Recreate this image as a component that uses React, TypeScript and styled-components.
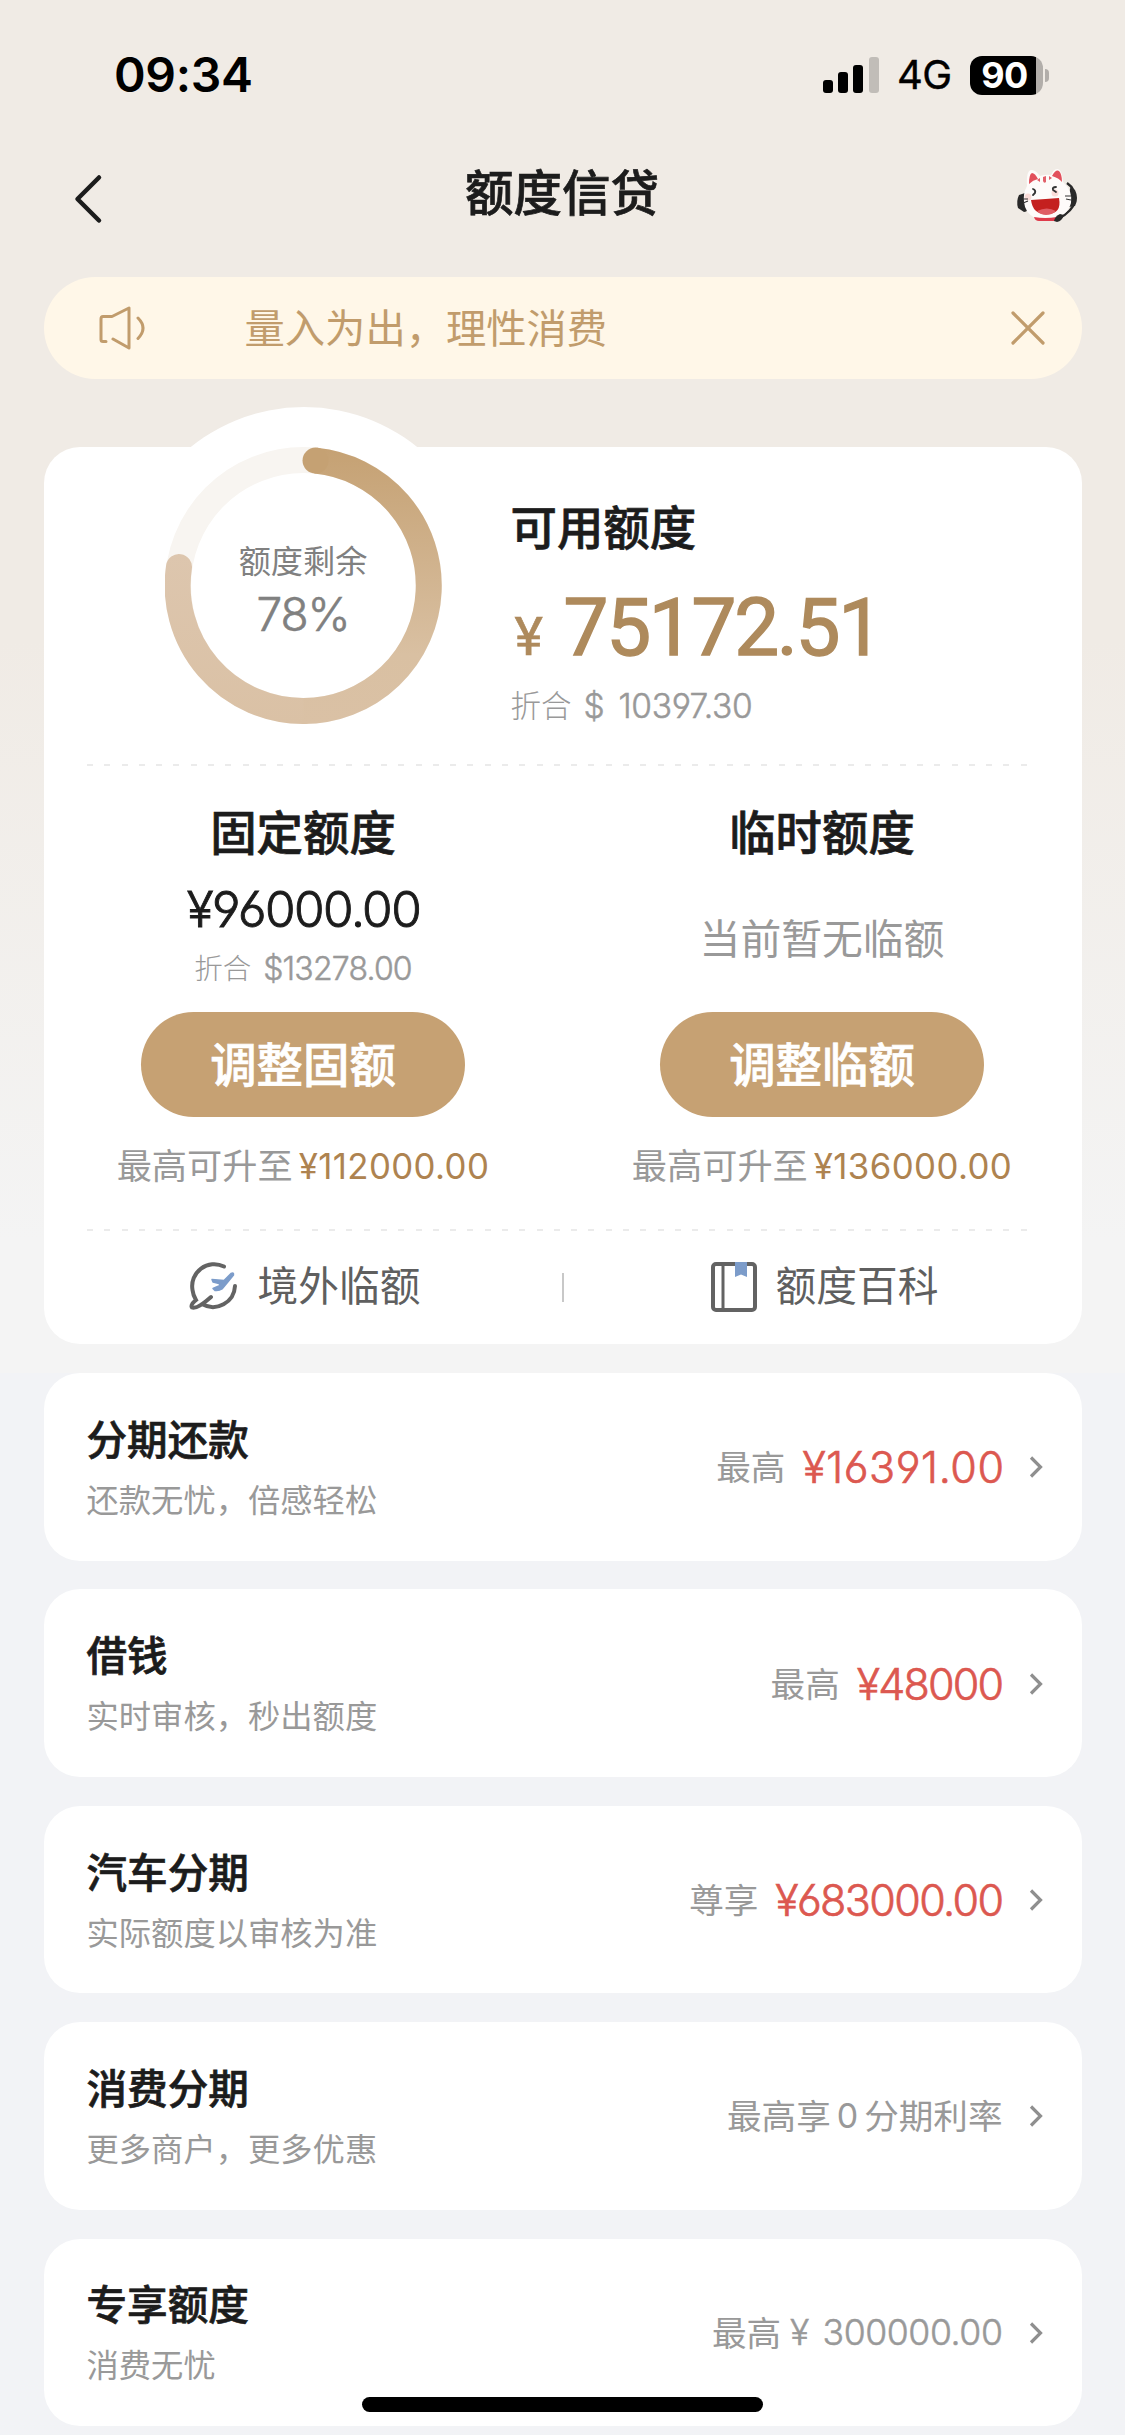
import React from "react";
import styled, { createGlobalStyle } from "styled-components";

const GlobalStyle = createGlobalStyle`
  * { box-sizing: border-box; }
  html, body { margin: 0; padding: 0; height: 2435px; overflow: hidden; }
  body {
    background: #f2f3f6;
    font-family: Inter, "Noto Sans CJK SC", sans-serif;
    color: #1c1c1c;
  }
`;

const Page = styled.div`
  position: relative;
  display: flex;
  flex-direction: column;
  width: 1125px;
  height: 2435px;
  overflow: hidden;
  background: linear-gradient(#f0ebe5 0, #f0ebe5 640px, #f4f4f4 1240px, #f4f4f4 1373px, #f2f3f6 1373px);
`;

const StatusBar = styled.header`
  display: flex;
  align-items: center;
  justify-content: space-between;
  flex: none;
  height: 150px;
  padding: 0 76px 0 114px;
`;
const Clock = styled.span`
  font-size: 48px;
  font-weight: 600;
  line-height: 50px;
  letter-spacing: -0.3px;
  color: #000;
`;
const StatusIcons = styled.div`
  display: flex;
  align-items: center;
`;
const Network = styled.span`
  width: 71px;
  padding-left: 17px;
  font-size: 40px;
  line-height: 42px;
  letter-spacing: -0.5px;
  color: #000;
  -webkit-text-stroke: 0.4px #000;
  white-space: nowrap;
`;
const Battery = styled.div`
  display: flex;
  align-items: center;
  margin-left: 19px;
`;
const BatteryBody = styled.div`
  display: flex;
  align-items: center;
  justify-content: center;
  width: 73px;
  height: 39px;
  padding-right: 4px;
  border-radius: 12px;
  background: linear-gradient(90deg, #000 66px, #b2aeaa 66px);
  color: #fff;
  font-size: 36px;
  font-weight: 700;
  line-height: 39px;
  letter-spacing: -0.5px;
`;
const BatteryNub = styled.div`
  width: 4px;
  height: 13px;
  margin-left: 2px;
  border-radius: 0 6px 6px 0;
  background: #b2aeaa;
`;

const NavBar = styled.nav`
  display: flex;
  align-items: center;
  justify-content: space-between;
  flex: none;
  height: 90px;
  padding: 0 47px 0 72px;
`;
const BackIcon = styled.svg`
  margin-top: 8px;
`;
const PageTitle = styled.h1`
  margin: 0 0 2px 4px;
  font-size: 48.5px;
  font-weight: 500;
  -webkit-text-stroke: 0.7px #1c1c1c;
  line-height: 60px;
`;

const Notice = styled.div`
  display: flex;
  align-items: center;
  flex: none;
  width: 1038px;
  height: 102px;
  margin: 37px auto 0;
  padding: 0 37px 0 54px;
  border-radius: 51px;
  background: #fff7e8;
  color: #c19c6c;
`;
const NoticeText = styled.span`
  flex: 1;
  padding: 1px 0 0 97px;
  font-size: 40.3px;
  line-height: 50px;
`;

const LimitCard = styled.section`
  position: relative;
  display: flex;
  flex-direction: column;
  flex: none;
  width: 1038px;
  height: 897px;
  margin: 68px auto 0;
  border-radius: 36px;
  background: #fff;
  &::before {
    content: "";
    position: absolute;
    left: 80px;
    top: -40px;
    width: 360px;
    height: 360px;
    border-radius: 50%;
    background: #fff;
  }
`;
const Overview = styled.div`
  position: relative;
  display: flex;
  height: 317px;
  padding-left: 121px;
`;
const Gauge = styled.div`
  position: relative;
  width: 277px;
  height: 277px;
`;
const GaugeLabel = styled.div`
  position: absolute;
  inset: 0;
  display: flex;
  flex-direction: column;
  align-items: center;
  padding-top: 90px;
  color: #808080;
`;
const GaugeCaption = styled.span`
  font-size: 32.2px;
  line-height: 50px;
`;
const GaugeValue = styled.span`
  margin: 2px 0 0 0;
  font-size: 46px;
  font-weight: 300;
  -webkit-text-stroke: 0.6px #808080;
  line-height: 50px;
  letter-spacing: -1.1px;
`;
const Available = styled.div`
  display: flex;
  flex-direction: column;
  padding: 51px 0 0 69px;
`;
const SectionTitle = styled.h2`
  margin: 0;
  font-size: 46.4px;
  font-weight: 500;
  -webkit-text-stroke: 0.7px #1c1c1c;
  line-height: 60px;
`;
const MainAmount = styled.div`
  display: flex;
  align-items: baseline;
  margin: 25px 0 4px;
  font-family: Roboto, sans-serif;
  font-weight: 400;
  line-height: 90px;
  color: #ae8a5c;
  white-space: nowrap;
`;
const Currency = styled.span`
  width: 53px;
  padding-left: 4px;
  font-size: 54px;
  -webkit-text-stroke: 0.6px #ae8a5c;
`;
const MainDigits = styled.span`
  font-size: 80px;
  letter-spacing: -2.3px;
  -webkit-text-stroke: 1.4px #ae8a5c;
`;
const Converted = styled.div<{ $size: number; $gap: number }>`
  display: flex;
  gap: ${(p) => p.$gap}px;
  font-size: ${(p) => p.$size}px;
  font-weight: 300;
  line-height: 40px;
  color: #999;
  white-space: nowrap;
`;
const ConvertedAmount = styled.span<{ $size: number; $track: number }>`
  font-size: ${(p) => p.$size}px;
  letter-spacing: ${(p) => p.$track}px;
  word-spacing: 5px;
  -webkit-text-stroke: 0.5px #999;
  font-feature-settings: "cv03", "cv04";
`;

const DashedRule = styled.div`
  position: relative;
  flex: none;
  width: 940px;
  height: 2px;
  margin-left: 43px;
  background: repeating-linear-gradient(90deg, #ebebeb 0, #ebebeb 6px, transparent 6px, transparent 17.29px);
`;

const LimitColumns = styled.div`
  display: grid;
  grid-template-columns: 1fr 1fr;
  height: 463px;
`;
const LimitColumn = styled.div`
  display: flex;
  flex-direction: column;
  align-items: center;
  padding-top: 37px;
`;
const LimitValue = styled.div`
  display: flex;
  flex-direction: column;
  align-items: center;
  justify-content: center;
  height: 149px;
`;
const FixedAmount = styled.span`
  margin: -7px 0 10px 1px;
  font-size: 49.5px;
  font-weight: 300;
  -webkit-text-stroke: 0.9px #1c1c1c;
  line-height: 60px;
  letter-spacing: -1.5px;
  font-feature-settings: "cv03", "cv04";
`;
const EmptyLimit = styled.span`
  padding-top: 2px;
  font-size: 40.8px;
  line-height: 50px;
  color: #999;
`;
const AdjustButton = styled.button`
  width: 324px;
  height: 105px;
  padding: 1px 0 0;
  border: 0;
  border-radius: 53px;
  background: #c6a173;
  color: #fff;
  font: 500 46.4px/60px Inter, "Noto Sans CJK SC", sans-serif;
  -webkit-text-stroke: 0.7px #fff;
`;
const UpTo = styled.div`
  display: flex;
  align-items: center;
  margin-top: 24px;
  font-size: 35.2px;
  line-height: 50px;
  color: #999;
  white-space: nowrap;
`;
const UpToAmount = styled.span`
  margin-left: 6px;
  font-size: 34.8px;
  color: #ae8350;
  letter-spacing: 0.4px;
`;

const Shortcuts = styled.div`
  display: grid;
  grid-template-columns: 1fr 2px 1fr;
  align-items: center;
  height: 112px;
`;
const Shortcut = styled.a`
  display: flex;
  align-items: center;
  justify-content: center;
  gap: 19px;
  padding-left: 4px;
  font-size: 40.7px;
  line-height: 50px;
  color: #5f5f5f;
`;
const ShortcutDivider = styled.i`
  width: 2px;
  height: 29px;
  background: #c8c8c8;
`;

const ProductList = styled.main`
  display: flex;
  flex-direction: column;
  flex: none;
  gap: 28.9px;
  padding: 29px 43.5px 0;
`;
const Product = styled.article`
  display: flex;
  align-items: center;
  justify-content: space-between;
  flex: none;
  height: 187.5px;
  padding: 0 38px 0 43px;
  border-radius: 36px;
  background: #fff;
`;
const ProductText = styled.div`
  padding-top: 8px;
`;
const ProductName = styled.h3`
  margin: 0;
  font-size: 40.6px;
  font-weight: 500;
  -webkit-text-stroke: 0.7px #1c1c1c;
  line-height: 60px;
`;
const ProductNote = styled.p`
  margin: 0;
  font-size: 32.3px;
  line-height: 60px;
  color: #999;
`;
const ProductOffer = styled.div`
  display: flex;
  align-items: center;
  padding-top: 1px;
  font-size: 34.6px;
  line-height: 50px;
  color: #999;
  white-space: nowrap;
`;
const OfferAmount = styled.span<{ $track: number }>`
  margin-left: 17px;
  margin-right: ${(p) => -p.$track - 1.5}px;
  font-size: 43px;
  font-weight: 300;
  -webkit-text-stroke: 0.7px #dc5850;
  letter-spacing: ${(p) => p.$track}px;
  color: #dc5850;
  font-feature-settings: "cv03", "cv04";
`;
const OfferZero = styled.span`
  margin: 0 6px 0 6px;
  font-size: 34px;
`;
const MutedAmount = styled.span`
  margin-left: 9px;
  font-size: 35.6px;
  font-weight: 300;
  word-spacing: 4px;
  letter-spacing: -0.4px;
  -webkit-text-stroke: 0.5px #999;
`;
const ChevronIcon = styled.svg`
  margin-left: 24px;
`;
const HomeIndicator = styled.div`
  position: absolute;
  left: 362px;
  top: 2397px;
  width: 401px;
  height: 15px;
  border-radius: 8px;
  background: #000;
`;

function Signal() {
  return (
    <svg width="57" height="36" viewBox="0 0 57 36">
      <rect x="0" y="23" width="10" height="13" rx="3" />
      <rect x="15" y="15" width="10" height="21" rx="3" />
      <rect x="30" y="8" width="10" height="28" rx="3" />
      <rect x="46" y="0" width="10" height="36" rx="3" fill="#c1bdb8" />
    </svg>
  );
}

function Mascot() {
  return (
    <svg width="62" height="56" viewBox="0 0 62 56">
      <path d="M51 16Q60 22 59 34Q56 45 43 51" fill="none" stroke="#292929" strokeWidth="2.5" />
      <path d="M9 26L3 28Q0 34 2 41L8 45Q13 45 12 38V28Z" fill="#292929" />
      <path d="M54 21L59 23Q63 31 59 39L53 40Z" fill="#292929" />
      <path d="M11 19Q10 4 15 3Q19 2 24 9Q30 7 35 8Q38 1 42 2Q46 3 47 15Q57 24 55 36Q51 50 36 51L19 51Q9 46 8 35Q7 26 11 19Z" fill="#fefbfa" />
      <path d="M13 17Q13 7 16 6Q19 6 22 12Q17 13 13 17Z" fill="#e2505c" />
      <path d="M36 9Q40 2 43 4Q46 7 46 15Q43 11 36 9Z" fill="#e2505c" />
      <path d="M21 13L24 11L24 15ZM27 10L30 9L30 15Q28 17 27 14ZM33 9L36 11L33 13Z" fill="#e2606a" />
      <circle cx="12" cy="30" r="3.5" fill="#fbdcd8" />
      <circle cx="39" cy="26" r="3.5" fill="#fbdcd8" />
      <path d="M17 22Q20 23 19 26L17 28M40 20Q36 20 37 23L40 25" fill="none" stroke="#333" strokeWidth="1.8" strokeLinecap="round" />
      <path d="M7 32L12 32M7 36L12 34M49 29L55 29M50 32L55 33" stroke="#333" strokeWidth="1.2" />
      <path d="M15 33Q30 32 43 31Q46 47 31 47Q17 48 15 33Z" fill="#c4201f" />
      <path d="M21 44Q31 39 40 44Q36 48 30 48Q25 48 21 44Z" fill="#df5d65" />
      <path d="M18 50Q29 52 41 50L40 54H23Q19 54 18 50Z" fill="#df3b4b" />
      <path d="M38 54Q39 49 44 47L48 48Q46 54 41 55Z" fill="#292929" />
    </svg>
  );
}

function Ring() {
  return (
    <svg width="277" height="277" viewBox="0 0 277 277">
      <defs>
        <linearGradient id="ring" x1="0" y1="0" x2="0" y2="277" gradientUnits="userSpaceOnUse">
          <stop offset="0" stopColor="#c5a173" />
          <stop offset="0.75" stopColor="#d9c0a2" />
          <stop offset="1" stopColor="#dac1a5" />
        </linearGradient>
        <linearGradient id="ringTail" x1="0" y1="105" x2="0" y2="277" gradientUnits="userSpaceOnUse">
          <stop offset="0" stopColor="#ddc6ae" />
          <stop offset="1" stopColor="#dac1a5" />
        </linearGradient>
      </defs>
      <circle cx="138.5" cy="138.5" r="125.5" fill="none" stroke="#f8f5f1" strokeWidth="26" />
      <path
        d="M138.5 264A125.5 125.5 0 0 1 14 120"
        fill="none"
        stroke="url(#ringTail)"
        strokeWidth="26"
        strokeLinecap="round"
      />
      <path
        d="M150.5 13.6A125.5 125.5 0 0 1 138.5 264"
        fill="none"
        stroke="url(#ring)"
        strokeWidth="26"
      />
      <circle cx="150.5" cy="13.6" r="13" fill="#c5a173" />
    </svg>
  );
}

function PlaneIcon() {
  return (
    <svg width="50" height="50" viewBox="0 0 50 50">
      <path
        d="M35 4.5A22 22 0 0 0 3.500 28Q4 33 7 38Q1 43 3 45.500Q8 47.500 22 35M13 42A22 22 0 0 0 46 24"
        fill="none"
        stroke="#636363"
        strokeWidth="4"
        strokeLinecap="round"
      />
      <path
        d="M23 17.500L35 18.500L42 11.500Q45 10 44.500 13L38 21L33 27Q30 29 26 28.500L24 26.500L31 23.500L30 21.500L24 20Z"
        fill="#7c9cca"
        stroke="#7c9cca"
        strokeWidth="1.5"
        strokeLinejoin="round"
      />
    </svg>
  );
}

function BookIcon() {
  return (
    <svg width="46" height="50" viewBox="0 0 46 50">
      <rect x="2" y="2" width="42" height="46" rx="3" fill="none" stroke="#636363" strokeWidth="4" />
      <path d="M12 2V48" stroke="#636363" strokeWidth="3" />
      <path d="M24 0H36V15L30 12.500L24 15Z" fill="#7c9cca" />
    </svg>
  );
}

function Chevron() {
  return (
    <ChevronIcon width="17" height="24" viewBox="0 0 17 24">
      <path d="M4 2.500L13.500 12L4 21.500" fill="none" stroke="#8f8f8f" strokeWidth="3.200" />
    </ChevronIcon>
  );
}

const products = [
  { name: "分期还款", note: "还款无忧，倍感轻松", offer: <>最高<OfferAmount $track={0.6}>¥16391.00</OfferAmount></> },
  { name: "借钱", note: "实时审核，秒出额度", offer: <>最高<OfferAmount $track={-1.8}>¥48000</OfferAmount></> },
  { name: "汽车分期", note: "实际额度以审核为准", offer: <>尊享<OfferAmount $track={-1.6}>¥683000.00</OfferAmount></> },
  { name: "消费分期", note: "更多商户，更多优惠", offer: <>最高享<OfferZero>0</OfferZero>分期利率</> },
  { name: "专享额度", note: "消费无忧", offer: <>最高<MutedAmount>¥ 300000.00</MutedAmount></> },
];

export default function App() {
  return (
    <Page>
      <GlobalStyle />
      <StatusBar>
        <Clock>09:34</Clock>
        <StatusIcons>
          <Signal />
          <Network>4G</Network>
          <Battery>
            <BatteryBody>90</BatteryBody>
            <BatteryNub />
          </Battery>
        </StatusIcons>
      </StatusBar>
      <NavBar>
        <BackIcon width="32" height="50" viewBox="0 0 32 50">
          <path d="M27 3.500L5.500 25L27 46.500" fill="none" stroke="#1c1c1c" strokeWidth="4.500" strokeLinecap="round" strokeLinejoin="round" />
        </BackIcon>
        <PageTitle>额度信贷</PageTitle>
        <Mascot />
      </NavBar>
      <Notice>
        <svg width="50" height="44" viewBox="0 0 50 44">
          <path d="M8 35.500H5Q3 35.500 3 33.500V13Q3 10.500 5 10.500H14L31 2V42L15 33" fill="none" stroke="#c19c6c" strokeWidth="3" strokeLinecap="round" strokeLinejoin="round" />
          <path d="M40 12Q50 22 40 32.500" fill="none" stroke="#c19c6c" strokeWidth="3" strokeLinecap="round" />
        </svg>
        <NoticeText>量入为出，理性消费</NoticeText>
        <svg width="34" height="34" viewBox="0 0 34 34">
          <path d="M2 2L32 32M32 2L2 32" stroke="#c19c6c" strokeWidth="3.200" strokeLinecap="round" />
        </svg>
      </Notice>
      <LimitCard>
        <Overview>
          <Gauge>
            <Ring />
            <GaugeLabel>
              <GaugeCaption>额度剩余</GaugeCaption>
              <GaugeValue>78%</GaugeValue>
            </GaugeLabel>
          </Gauge>
          <Available>
            <SectionTitle>可用额度</SectionTitle>
            <MainAmount>
              <Currency>¥</Currency>
              <MainDigits>75172.51</MainDigits>
            </MainAmount>
            <Converted $size={30.5} $gap={12}>
              折合<ConvertedAmount $size={33.5} $track={-0.3}>$ 10397.30</ConvertedAmount>
            </Converted>
          </Available>
        </Overview>
        <DashedRule />
        <LimitColumns>
          <LimitColumn>
            <SectionTitle>固定额度</SectionTitle>
            <LimitValue>
              <FixedAmount>¥96000.00</FixedAmount>
              <Converted $size={28.5} $gap={12}>
                折合<ConvertedAmount $size={32} $track={-0.8}>$13278.00</ConvertedAmount>
              </Converted>
            </LimitValue>
            <AdjustButton>调整固额</AdjustButton>
            <UpTo>最高可升至<UpToAmount>¥112000.00</UpToAmount></UpTo>
          </LimitColumn>
          <LimitColumn>
            <SectionTitle>临时额度</SectionTitle>
            <LimitValue>
              <EmptyLimit>当前暂无临额</EmptyLimit>
            </LimitValue>
            <AdjustButton>调整临额</AdjustButton>
            <UpTo>最高可升至<UpToAmount>¥136000.00</UpToAmount></UpTo>
          </LimitColumn>
        </LimitColumns>
        <DashedRule />
        <Shortcuts>
          <Shortcut><PlaneIcon />境外临额</Shortcut>
          <ShortcutDivider />
          <Shortcut><BookIcon />额度百科</Shortcut>
        </Shortcuts>
      </LimitCard>
      <ProductList>
        {products.map((p) => (
          <Product key={p.name}>
            <ProductText>
              <ProductName>{p.name}</ProductName>
              <ProductNote>{p.note}</ProductNote>
            </ProductText>
            <ProductOffer>
              {p.offer}
              <Chevron />
            </ProductOffer>
          </Product>
        ))}
      </ProductList>
      <HomeIndicator />
    </Page>
  );
}
